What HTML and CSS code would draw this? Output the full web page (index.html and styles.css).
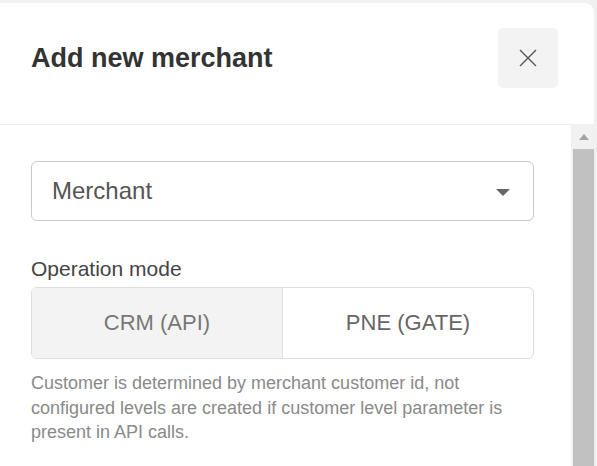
FILE: index.html
```
<!DOCTYPE html>
<html>
<head>
<meta charset="utf-8">
<link rel="stylesheet" href="styles.css">
</head>
<body>
<div class="card">
  <div class="header">
    <h1 class="title">Add new merchant</h1>
    <button class="close" aria-label="Close">
      <svg width="18" height="18" viewBox="0 0 18 18"><path d="M1 1 L17 17 M17 1 L1 17" stroke="#555" stroke-width="1.4" fill="none"/></svg>
    </button>
  </div>
  <div class="body">
    <div class="content">
      <div class="select">
        <span class="select-value">Merchant</span>
        <svg class="caret" width="14" height="7" viewBox="0 0 14 7"><path d="M0 0 H14 L7 7 Z" fill="#666"/></svg>
      </div>
      <div class="label">Operation mode</div>
      <div class="toggle">
        <div class="opt active">CRM (API)</div>
        <div class="opt">PNE (GATE)</div>
      </div>
      <p class="help">Customer is determined by merchant customer id, not configured levels are created if customer level parameter is present in API calls.</p>
    </div>
    <div class="scrollbar">
      <div class="sb-up"><svg width="10" height="6" viewBox="0 0 10 6"><path d="M0 6 H10 L5 0 Z" fill="#a3a3a3"/></svg></div>
      <div class="sb-thumb"></div>
    </div>
  </div>
</div>
</body>
</html>
```
FILE: styles.css
```
html, body {
  margin: 0;
  height: 100%;
}
body {
  background: #f0f0f0;
  font-family: "Liberation Sans", Arial, sans-serif;
  padding-top: 3px;
  box-sizing: border-box;
  overflow: hidden;
}
.card {
  width: 594px;
  height: 463px;
  background: #fff;
  border-top-right-radius: 9px;
  display: flex;
  flex-direction: column;
}
.header {
  height: 122px;
  box-sizing: border-box;
  padding: 25px 36px 0 31px;
  display: flex;
  justify-content: space-between;
  align-items: flex-start;
  border-bottom: 1px solid #efefef;
  flex: none;
}
.title {
  margin: 0;
  font-size: 27px;
  font-weight: bold;
  color: #333;
  line-height: 60px;
}
.close {
  width: 60px;
  height: 60px;
  border: none;
  border-radius: 5px;
  background: #f3f3f3;
  display: flex;
  align-items: center;
  justify-content: center;
  padding: 0;
}
.body {
  flex: 1;
  display: flex;
  min-height: 0;
}
.content {
  flex: 1;
  padding: 36px 37px 0 31px;
}
.select {
  height: 60px;
  box-sizing: border-box;
  border: 1px solid #c9c9c9;
  border-radius: 6px;
  display: flex;
  align-items: center;
  justify-content: space-between;
  padding: 0 23px 0 20px;
}
.select-value {
  font-size: 24px;
  color: #555;
}
.caret {
  margin-top: 2px;
}
.label {
  margin-top: 36px;
  font-size: 21px;
  line-height: 24px;
  color: #444;
}
.toggle {
  margin-top: 6px;
  height: 72px;
  box-sizing: border-box;
  border: 1px solid #dedede;
  border-radius: 6px;
  display: flex;
  overflow: hidden;
}
.opt {
  flex: 1;
  display: flex;
  align-items: center;
  justify-content: center;
  font-size: 22px;
  color: #666;
}
.opt.active {
  background: #f3f3f3;
  color: #777;
  border-right: 1px solid #dedede;
}
.help {
  margin: 12px 0 0;
  font-size: 18px;
  line-height: 24.5px;
  color: #8a8a8a;
}
.scrollbar {
  width: 23px;
  background: #f1f1f1;
  display: flex;
  flex-direction: column;
  align-items: flex-end;
}
.sb-up {
  width: 21px;
  height: 24px;
  display: flex;
  align-items: center;
  justify-content: center;
}
.sb-thumb {
  width: 21px;
  flex: 1;
  background: #c1c1c1;
}
```
